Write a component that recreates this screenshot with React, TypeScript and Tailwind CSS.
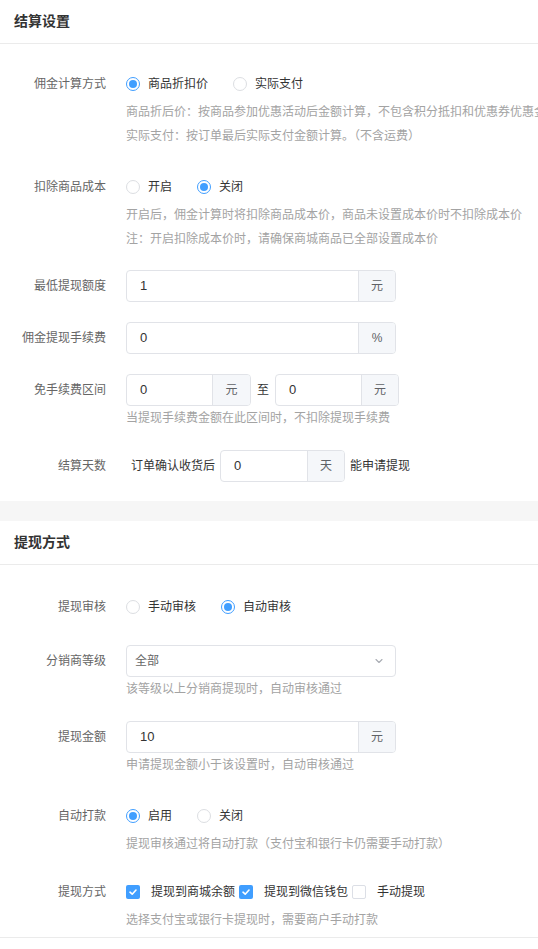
import React from 'react';

const FONT = '"Liberation Sans", "Noto Sans CJK SC", sans-serif';

function Radio({ checked, label }: { checked?: boolean; label: string }) {
  return (
    <div className="flex items-center mr-[25px]">
      {checked ? (
        <span className="w-[14px] h-[14px] rounded-full border border-[#409eff] flex items-center justify-center">
          <span className="w-[8px] h-[8px] rounded-full bg-[#409eff]" />
        </span>
      ) : (
        <span className="w-[14px] h-[14px] rounded-full border border-[#dcdee2] bg-white" />
      )}
      <span className="pl-[8px] text-[12px] text-[#333]">{label}</span>
    </div>
  );
}

function Checkbox({ checked, label }: { checked?: boolean; label: string }) {
  return (
    <div className="flex items-center">
      {checked ? (
        <span className="w-[14px] h-[14px] rounded-[2px] bg-[#409eff] flex items-center justify-center">
          <svg width="10" height="10" viewBox="0 0 10 10" fill="none">
            <path d="M2 5.2 L4.2 7.2 L8 3" stroke="white" strokeWidth="1.6" strokeLinecap="round" strokeLinejoin="round" />
          </svg>
        </span>
      ) : (
        <span className="w-[14px] h-[14px] rounded-[2px] border border-[#dcdfe6] bg-white" />
      )}
      <span className="pl-[11px] pr-[4px] text-[12px] text-[#333]">{label}</span>
    </div>
  );
}

function InputAddon({ value, unit, width, addon = 'w-[37px]' }: { value: string; unit: string; width: string; addon?: string }) {
  return (
    <div className={`${width} h-[32px] flex border border-[#e1e3e8] rounded-[4px] overflow-hidden bg-white`}>
      <div className="flex-1 flex items-center pl-[13px] text-[13px] text-[#333]">{value}</div>
      <div className={`${addon} flex items-center justify-center bg-[#f5f7fa] border-l border-[#e1e3e8] text-[12px] text-[#606266]`}>
        {unit}
      </div>
    </div>
  );
}

function Help({ children }: { children: React.ReactNode }) {
  return <div className="leading-[24px] text-[12px] text-[#a3a3a3] whitespace-nowrap">{children}</div>;
}

function Item({ label, children, className = 'mb-[20px]' }: { label: string; children: React.ReactNode; className?: string }) {
  return (
    <div className={`flex ${className}`}>
      <div className="w-[106px] shrink-0 h-[32px] flex items-center justify-end text-[12px] text-[#666]">{label}</div>
      <div className="ml-[20px] flex-1 min-w-0">{children}</div>
    </div>
  );
}

function Header({ title }: { title: string }) {
  return (
    <div className="h-[44px] px-[14px] flex items-center border-b border-[#ebebeb] text-[14px] font-bold text-[#333]">
      {title}
    </div>
  );
}

export default function App() {
  return (
    <div className="w-[538px] h-[949px] overflow-hidden bg-white" style={{ fontFamily: FONT }}>
      <Header title="结算设置" />
      <div className="pt-[24px]">
        <Item label="佣金计算方式" className="mb-[23px]">
          <div className="h-[32px] flex items-center">
            <Radio checked label="商品折扣价" />
            <Radio label="实际支付" />
          </div>
          <div className="overflow-hidden">
            <Help>商品折后价：按商品参加优惠活动后金额计算，不包含积分抵扣和优惠券优惠金额</Help>
          </div>
          <Help>实际支付：按订单最后实际支付金额计算。（不含运费）</Help>
        </Item>

        <Item label="扣除商品成本" className="mb-[19px]">
          <div className="h-[32px] flex items-center">
            <Radio label="开启" />
            <Radio checked label="关闭" />
          </div>
          <Help>开启后，佣金计算时将扣除商品成本价，商品未设置成本价时不扣除成本价</Help>
          <Help>注：开启扣除成本价时，请确保商城商品已全部设置成本价</Help>
        </Item>

        <Item label="最低提现额度">
          <InputAddon value="1" unit="元" width="w-[270px]" />
        </Item>

        <Item label="佣金提现手续费">
          <InputAddon value="0" unit="%" width="w-[270px]" />
        </Item>

        <Item label="免手续费区间">
          <div className="flex items-center">
            <InputAddon value="0" unit="元" width="w-[125px]" addon="w-[38px]" />
            <span className="mx-[6px] text-[12px] text-[#333]">至</span>
            <InputAddon value="0" unit="元" width="w-[124px]" />
          </div>
          <Help>当提现手续费金额在此区间时，不扣除提现手续费</Help>
        </Item>

        <Item label="结算天数" className="mb-[19px]">
          <div className="flex items-center">
            <span className="ml-[5px] text-[12px] text-[#333]">订单确认收货后</span>
            <div className="ml-[5px]">
              <InputAddon value="0" unit="天" width="w-[125px]" />
            </div>
            <span className="ml-[5px] text-[12px] text-[#333]">能申请提现</span>
          </div>
        </Item>
      </div>

      <div className="h-[20px] bg-[#f6f6f6]" />

      <Header title="提现方式" />
      <div className="pt-[26px] pb-[5px] border-b border-[#ebebeb]">
        <Item label="提现审核" className="mb-[22px]">
          <div className="h-[32px] flex items-center">
            <Radio label="手动审核" />
            <Radio checked label="自动审核" />
          </div>
        </Item>

        <Item label="分销商等级">
          <div className="w-[270px] h-[32px] flex items-center justify-between border border-[#e1e3e8] rounded-[4px] pl-[8px] pr-[11px] text-[12px] text-[#666]">
            <span>全部</span>
            <svg width="10" height="10" viewBox="0 0 10 10" fill="none">
              <path d="M2 3.5 L5 6.5 L8 3.5" stroke="#a8abb2" strokeWidth="1.1" strokeLinecap="round" strokeLinejoin="round" />
            </svg>
          </div>
          <Help>该等级以上分销商提现时，自动审核通过</Help>
        </Item>

        <Item label="提现金额" className="mb-[23px]">
          <InputAddon value="10" unit="元" width="w-[270px]" />
          <Help>申请提现金额小于该设置时，自动审核通过</Help>
        </Item>

        <Item label="自动打款">
          <div className="h-[32px] flex items-center">
            <Radio checked label="启用" />
            <Radio label="关闭" />
          </div>
          <Help>提现审核通过将自动打款（支付宝和银行卡仍需要手动打款）</Help>
        </Item>

        <Item label="提现方式" className="mb-0">
          <div className="h-[32px] flex items-center">
            <Checkbox checked label="提现到商城余额" />
            <Checkbox checked label="提现到微信钱包" />
            <Checkbox label="手动提现" />
          </div>
          <Help>选择支付宝或银行卡提现时，需要商户手动打款</Help>
        </Item>
      </div>
    </div>
  );
}
